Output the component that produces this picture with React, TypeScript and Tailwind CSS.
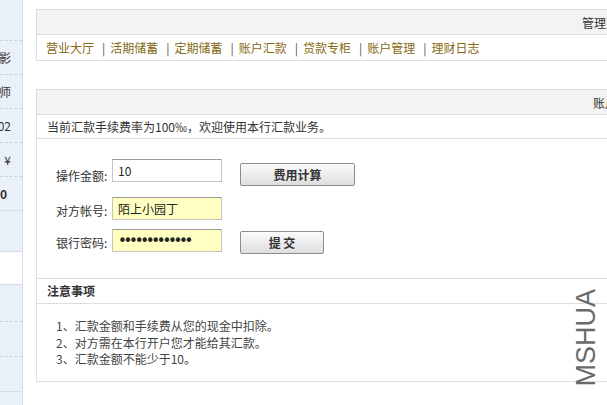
const cjk = "font-['Noto_Sans_CJK_SC','Microsoft_YaHei',sans-serif]";

const navItems = ["营业大厅", "活期储蓄", "定期储蓄", "账户汇款", "贷款专柜", "账户管理", "理财日志"];

const notes = [
  "1、汇款金额和手续费从您的现金中扣除。",
  "2、对方需在本行开户您才能给其汇款。",
  "3、汇款金额不能少于10。",
];

function Sidebar() {
  const item = "h-[34px] flex items-center justify-end pr-[11px] whitespace-nowrap";
  const dashed = "border-b border-dashed border-[#c9d3e0]";
  return (
    <div className="w-[23px] shrink-0 bg-[#eaf0f7] border-r border-[#d3dce8] flex flex-col overflow-hidden text-[12px] text-[#333]">
      <div className={`h-[41px] ${dashed}`} />
      <div className={`${item} ${dashed}`}>摄影</div>
      <div className={`${item} ${dashed}`}>理财师</div>
      <div className={`${item} ${dashed}`}>2002</div>
      <div className={`${item} ${dashed}`}>¥</div>
      <div className={`${item} border-b border-[#d3dce8] font-bold pr-[15px]`}>10</div>
      <div className="h-[41px] border-b border-[#d3dce8]" />
      <div className="h-[33px] bg-white border-b border-[#d3dce8]" />
      <div className={`h-[37px] ${dashed}`} />
      <div className={`h-[35px] ${dashed}`} />
      <div className="h-[35px] border-b border-[#d3dce8]" />
      <div className="flex-1" />
    </div>
  );
}

function FormRow({
  label,
  children,
  className = "",
  labelClass = "",
}: {
  label: string;
  children: React.ReactNode;
  className?: string;
  labelClass?: string;
}) {
  return (
    <div className={`flex items-start ${className}`}>
      <span className={`w-[56px] h-[23px] leading-[28px] text-[12px] text-[#333] ${labelClass}`}>{label}</span>
      {children}
    </div>
  );
}

const inputBase =
  "w-[110px] h-[23px] border border-[#c4c4c4] border-t-[#9a9a9a] px-[5px] text-[12px] text-[#222] outline-none";
const buttonBase =
  "h-[23px] ml-[18px] border border-[#8c8c8c] bg-gradient-to-b from-[#fbfbfb] to-[#dedede] text-[12px] font-bold text-[#333] rounded-[2px]";

export default function App() {
  return (
    <div className={`relative w-[607px] h-[405px] overflow-hidden bg-white flex ${cjk}`}>
      <Sidebar />

      <div className="flex-1 min-w-0 pl-[13px] pt-[9px]">
        {/* top menu panel */}
        <div className="w-[700px] border border-[#dedede]">
          <div className="h-[25px] bg-[#f3f3f3] border-b border-[#dedede] pl-[545px] text-[12px] leading-[25px] text-[#333]">
            管理菜单
          </div>
          <div className="h-[25px] flex items-center pl-[9px] text-[12px] leading-none">
            {navItems.map((n, i) => (
              <span key={n} className="flex items-center">
                {i > 0 && <span className="ml-[8px] mr-[5px] text-[#555]">|</span>}
                <a href="#" className="text-[#866912]">
                  {n}
                </a>
              </span>
            ))}
          </div>
        </div>

        {/* transfer panel */}
        <div className="w-[700px] mt-[28px] border border-[#dedede] text-[12px] text-[#333]">
          <div className="h-[25px] bg-[#f3f3f3] border-b border-[#dedede] pl-[556px] leading-[25px]">
            账户汇款
          </div>
          <div className="h-[24px] border-b border-[#dedede] pl-[10px] leading-[24px]">
            当前汇款手续费率为100‰，欢迎使用本行汇款业务。
          </div>

          <div className="h-[139px] pl-[19px] pt-[20px]">
            <FormRow label="操作金额:" labelClass="pt-[3px]">
              <input readOnly value="10" className={`${inputBase} bg-white`} />
              <button className={`${buttonBase} w-[115px] mt-[4px]`}>费用计算</button>
            </FormRow>
            <FormRow label="对方帐号:" className="mt-[11px]">
              <input readOnly value="陌上小园丁" className={`${inputBase} bg-[#ffffc2]`} />
            </FormRow>
            <FormRow label="银行密码:" className="mt-[9px]">
              <input
                readOnly
                type="password"
                value="abcdefghijklm"
                className={`${inputBase} bg-[#ffffc2] font-['DejaVu_Sans',sans-serif] text-[15px] tracking-[-3.3px]`}
              />
              <button className={`${buttonBase} w-[84px] mt-[2px]`}>提 交</button>
            </FormRow>
          </div>

          <div className="h-[26px] border-y border-[#dedede] pl-[10px] leading-[24px] font-bold">
            注意事项
          </div>
          <div className="h-[77px] pl-[19px] pt-[14px] leading-[16.5px] text-[#444]">
            {notes.map((n) => (
              <div key={n}>{n}</div>
            ))}
          </div>
        </div>
      </div>

      {/* watermark */}
      <div className="absolute left-[573px] top-[289px] font-['Liberation_Sans',sans-serif] text-[27px] leading-none text-[#6a6a6a] [writing-mode:vertical-rl] rotate-180">
        MSHUA
      </div>
    </div>
  );
}
